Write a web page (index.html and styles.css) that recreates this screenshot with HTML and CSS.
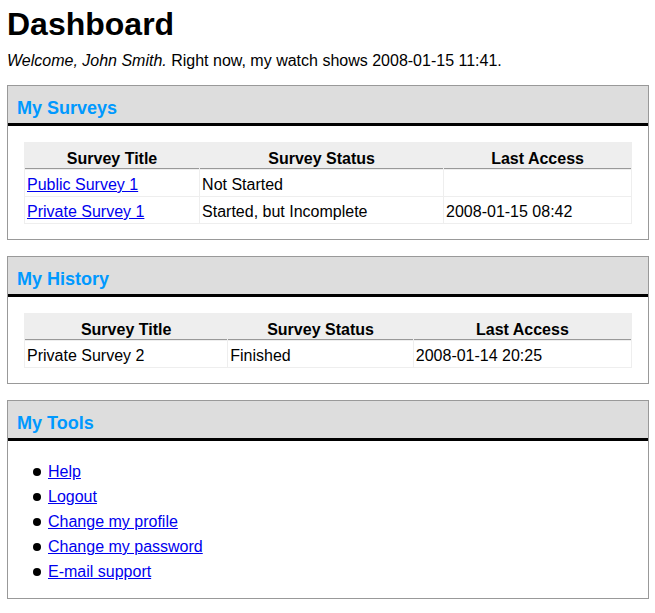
FILE: index.html
```html
<!DOCTYPE html>
<html>
<head>
<meta charset="utf-8">
<title>Dashboard</title>
<link rel="stylesheet" href="styles.css">
</head>
<body>
<h1 class="page-title">Dashboard</h1>
<p class="welcome"><em>Welcome, John Smith.</em> Right now, my watch shows 2008-01-15 11:41.</p>

<div class="box">
  <div class="box-head"><h2 class="box-title">My Surveys</h2></div>
  <div class="box-body">
    <table class="grid">
      <tr><th>Survey Title</th><th>Survey Status</th><th>Last Access</th></tr>
      <tr><td><a href="#">Public Survey 1</a></td><td>Not Started</td><td></td></tr>
      <tr><td><a href="#">Private Survey 1</a></td><td>Started, but Incomplete</td><td>2008-01-15 08:42</td></tr>
    </table>
  </div>
</div>

<div class="box">
  <div class="box-head"><h2 class="box-title">My History</h2></div>
  <div class="box-body">
    <table class="grid">
      <tr><th>Survey Title</th><th>Survey Status</th><th>Last Access</th></tr>
      <tr><td>Private Survey 2</td><td>Finished</td><td>2008-01-14 20:25</td></tr>
    </table>
  </div>
</div>

<div class="box">
  <div class="box-head"><h2 class="box-title">My Tools</h2></div>
  <div class="box-body tools-body">
    <ul class="tools">
      <li><a href="#">Help</a></li>
      <li><a href="#">Logout</a></li>
      <li><a href="#">Change my profile</a></li>
      <li><a href="#">Change my password</a></li>
      <li><a href="#">E-mail support</a></li>
    </ul>
  </div>
</div>
</body>
</html>
```
FILE: styles.css
```css
html, body {
  background: #fff;
}
body {
  margin: 0;
  padding: 6px 6px 8px 7px;
  font-family: "Liberation Sans", Arial, sans-serif;
  font-size: 16px;
  color: #000;
}
.page-title {
  margin: 0 0 9px;
  font-size: 32px;
  font-weight: bold;
}
.welcome {
  margin: 0 0 15px;
}
.box {
  border: 1px solid #999;
  margin-bottom: 16px;
}
.box-head {
  background: #ddd;
  border-bottom: 3px solid #000;
  padding: 12px 9px 4px;
}
.box-title {
  margin: 0;
  font-size: 18px;
  font-weight: bold;
  color: #0099ff;
}
.box-body {
  padding: 16px 16px 15px;
}
.grid {
  width: 100%;
  border-collapse: separate;
  border-spacing: 1px;
  background: #eee;
}
.grid th {
  background: #eee;
  font-weight: bold;
  text-align: center;
  padding: 7px 2px 0;
  border-bottom: 1px solid #999;
}
.grid td {
  background: #fff;
  padding: 6px 2px 2px;
  text-align: left;
}
a {
  color: #00e;
  text-decoration: underline;
}
.tools-body {
  padding: 18px 16px 14px;
}
.tools {
  list-style: none;
  margin: 0;
  padding: 0 0 0 9px;
}
.tools li {
  line-height: 25px;
  display: flex;
  align-items: center;
}
.tools li::before {
  content: "";
  width: 8px;
  height: 8px;
  border-radius: 50%;
  background: #000;
  margin-right: 7px;
}
```
